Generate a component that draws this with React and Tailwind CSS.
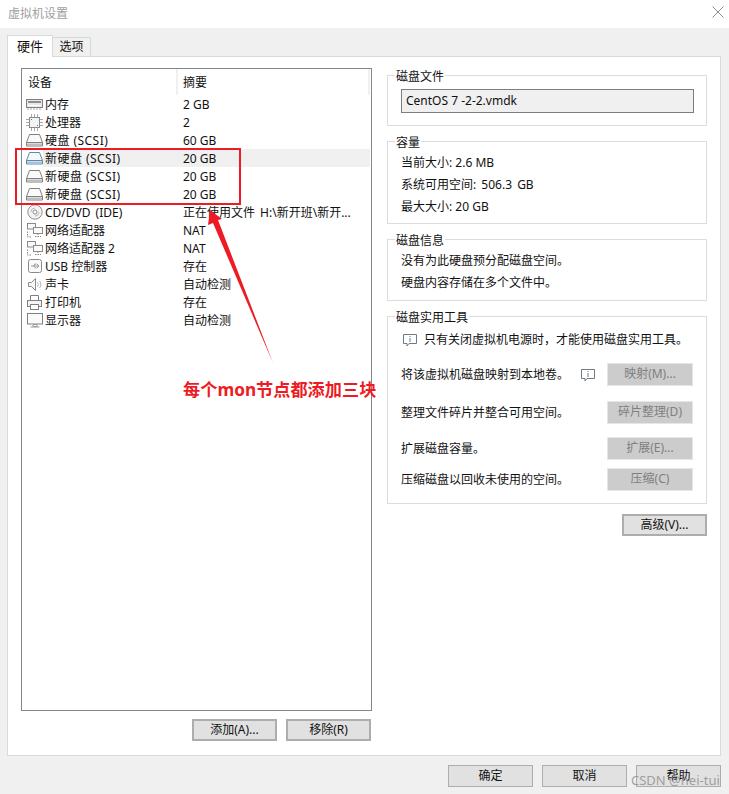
import React from "react";

const Cjk = "font-['Noto_Sans','Noto_Sans_CJK_SC',sans-serif]";

const MemoryIcon = () => (
  <svg width="17" height="11" viewBox="0 0 17 11" fill="none" stroke="#808080">
    <rect x="0.5" y="0.5" width="16" height="8" fill="#e8e8e8" />
    <path d="M2 3h13" stroke="#8f8f8f" strokeWidth="2" />
    <path d="M2 6.500h13" stroke="#fff" />
    <path d="M1 10h15" stroke="#a8a8a8" strokeDasharray="2 1" />
  </svg>
);

const CpuIcon = () => (
  <svg width="17" height="17" viewBox="0 0 17 17" fill="none" stroke="#8a8a8a">
    <rect x="3.5" y="3.5" width="10" height="10" fill="#f4f4f4" />
    <path d="M5.5 0v3M8.5 0v3M11.5 0v3M5.5 14v3M8.5 14v3M11.5 14v3M0 5.5h3M0 8.5h3M0 11.5h3M14 5.5h3M14 8.5h3M14 11.5h3" stroke="#a8a8a8" />
    <path d="M5 5h1v1H5zM11 11h1v1h-1z" fill="#777" stroke="none" />
  </svg>
);

const DiskIcon = ({ blue }) => {
  const c = blue ? "#5f87a8" : "#808080";
  return (
    <svg width="17" height="13" viewBox="0 0 17 13" fill="none" stroke={c}>
      <path d="M3.5 0.5h10l3 8v3.5h-16V8.5z" fill={blue ? "#f4f8fb" : "#fafafa"} />
      <path d="M0.5 8.5h16" />
      <path d="M1 10.5h15" stroke={blue ? "#a5c3da" : "#bdbdbd"} strokeWidth="2" />
    </svg>
  );
};

const CdIcon = () => (
  <svg width="16" height="16" viewBox="0 0 16 16" fill="none" stroke="#8f8f8f">
    <circle cx="8" cy="8" r="7.2" fill="#f2f2f2" />
    <circle cx="8" cy="8" r="2" fill="#fff" />
    <path d="M4 8a4 4 0 0 1 4-4M12 8a4 4 0 0 1-4 4" stroke="#bdbdbd" />
  </svg>
);

const NetIcon = () => (
  <svg width="16" height="15" viewBox="0 0 16 15" fill="none" stroke="#8a8a8a">
    <rect x="0.5" y="0.5" width="8" height="5.5" fill="#fafafa" />
    <rect x="6.5" y="4.5" width="9" height="6" fill="#fafafa" />
    <path d="M11 10.5v3M8 13.5h6M0.5 8.5v5.5h4" strokeDasharray="1.5 1" />
  </svg>
);

const UsbIcon = () => (
  <svg width="14" height="14" viewBox="0 0 14 14" fill="none" stroke="#8a8a8a">
    <rect x="0.5" y="0.5" width="13" height="13" rx="2" fill="#fafafa" />
    <path d="M3 7h8M9 5l2 2-2 2M5.5 7l1.500-2h1.500M6 7l1.500 2h1" stroke="#999" />
  </svg>
);

const SoundIcon = () => (
  <svg width="14" height="13" viewBox="0 0 14 13" fill="none" stroke="#8a8a8a">
    <path d="M0.500 4.500h3l4-4v12l-4-4h-3z" fill="#f6f6f6" />
    <path d="M9.500 4.500a3 3 0 0 1 0 4M11.500 3a5 5 0 0 1 0 7" stroke="#b0b0b0" />
  </svg>
);

const PrinterIcon = () => (
  <svg width="15" height="15" viewBox="0 0 15 15" fill="none" stroke="#808080">
    <path d="M3.500 5.500v-5h8v5" fill="#fff" />
    <rect x="0.500" y="5.500" width="14" height="6" fill="#f4f4f4" />
    <rect x="3.500" y="9.500" width="8" height="5" fill="#fff" />
  </svg>
);

const MonitorIcon = () => (
  <svg width="16" height="15" viewBox="0 0 16 15" fill="none" stroke="#808080">
    <rect x="0.500" y="0.500" width="15" height="10.500" fill="#fafafa" />
    <path d="M6 11.500h4v2H6zM3.500 14h9" stroke="#9a9a9a" />
  </svg>
);

const InfoIcon = () => (
  <svg width="14" height="13" viewBox="0 0 14 13" fill="none" stroke="#707a80">
    <path d="M0.500 0.500h13v9H6l-2 2.500v-2.500H0.500z" fill="#fff" />
    <path d="M7 2v1M7 4v4" stroke="#5a7f96" />
  </svg>
);

const scsi = "tracking-[0.45px]";

const devices = [
  { icon: <MemoryIcon />, name: "内存", summary: "2 GB" },
  { icon: <CpuIcon />, name: "处理器", summary: "2" },
  { icon: <DiskIcon />, name: "硬盘 (SCSI)", nameClass: scsi, summary: "60 GB" },
  { icon: <DiskIcon blue />, name: "新硬盘 (SCSI)", nameClass: scsi, summary: "20 GB", selected: true },
  { icon: <DiskIcon />, name: "新硬盘 (SCSI)", nameClass: scsi, summary: "20 GB" },
  { icon: <DiskIcon />, name: "新硬盘 (SCSI)", nameClass: scsi, summary: "20 GB" },
  { icon: <CdIcon />, name: "CD/DVD (IDE)", nameClass: "[word-spacing:2px]", summary: "正在使用文件 H:\\新开班\\新开...", summaryClass: "[word-spacing:2px]" },
  { icon: <NetIcon />, name: "网络适配器", summary: "NAT" },
  { icon: <NetIcon />, name: "网络适配器 2", summary: "NAT" },
  { icon: <UsbIcon />, name: "USB 控制器", summary: "存在" },
  { icon: <SoundIcon />, name: "声卡", summary: "自动检测" },
  { icon: <PrinterIcon />, name: "打印机", summary: "存在" },
  { icon: <MonitorIcon />, name: "显示器", summary: "自动检测" },
];

const tools = [
  { label: "将该虚拟机磁盘映射到本地卷。", button: "映射(M)...", info: true, h: "h-[38px]" },
  { label: "整理文件碎片并整合可用空间。", button: "碎片整理(D)", h: "h-[38px]" },
  { label: "扩展磁盘容量。", button: "扩展(E)...", h: "h-[34px]" },
  { label: "压缩磁盘以回收未使用的空间。", button: "压缩(C)", h: "h-[28px]" },
];

const Group = ({ title, className, children }) => (
  <fieldset className={`relative border border-[#dcdcdc] ${className}`}>
    <span className="absolute -top-[8px] left-[7px] bg-white px-px leading-[17px]">{title}</span>
    {children}
  </fieldset>
);

const Btn = ({ className = "", children }) => (
  <div className={`flex items-center justify-center border border-[#adadad] bg-[#e1e1e1] ${className}`}>
    {children}
  </div>
);

const ToolBtn = ({ children }) => (
  <div className="flex h-[23px] w-[86px] items-center justify-center border border-[#e6e6e6] bg-[#cccccc] text-[#7f7f7f]">
    {children}
  </div>
);

export default function App() {
  return (
    <div className={`relative flex h-[794px] w-[729px] flex-col overflow-hidden bg-[#f0f0f0] text-[12px] text-[#111111] ${Cjk}`}>
      {/* Title bar */}
      <div className="flex h-[28px] items-center justify-between bg-white pl-[8px] pr-[4px]">
        <span className="text-[12px] text-[#a0a0a0]">虚拟机设置</span>
        <svg width="12" height="12" viewBox="0 0 12 12" stroke="#8c8c8c" className="mr-[1px] -mt-[4px]">
          <path d="M0.500 0.500l11 11M11.500 0.500l-11 11" />
        </svg>
      </div>

      {/* Tabs */}
      <div className="relative z-10 mt-[7px] flex h-[22px] items-end pl-[7px]">
        <div className="flex h-[22px] w-[46px] items-center justify-center border border-b-0 border-[#d9d9d9] bg-white text-[13px]">硬件</div>
        <div className="mb-px flex h-[19px] w-[38px] items-center justify-center border border-b-0 border-l-0 border-[#d9d9d9] bg-[#f0f0f0]">选项</div>
      </div>

      {/* Tab panel */}
      <div className="-mt-px mx-[7px] flex h-[700px] w-[714px] gap-[15px] border border-[#d9d9d9] bg-white pl-[13px] pt-[11px]">
        <div className="flex w-[351px] flex-col">
          <div className="h-[643px] border border-[#82878f] bg-white">
            <div className="flex h-[26px] items-center">
              <div className="w-[156px] border-r-2 border-[#f0f0f0] pl-[6px] pt-[2px] leading-[24px]">设备</div>
              <div className="flex-1 border-r-2 border-[#f0f0f0] pl-[5px] pt-[2px] leading-[24px]">摘要</div>
              <div className="w-px" />
            </div>
            {devices.map((d, i) => (
              <div key={i} className="flex h-[18px] items-center">
                <div className="flex w-[21px] shrink-0 items-center justify-center pl-[4px]">{d.icon}</div>
                <div className={`flex h-full w-[327px] items-center pt-px ${d.selected ? "bg-[#f0f0f0]" : ""}`}>
                  <span className={`w-[140px] shrink-0 whitespace-nowrap pl-[2px] ${d.nameClass || ""}`}>{d.name}</span>
                  <span className={`whitespace-nowrap ${d.summaryClass || ""}`}>{d.summary}</span>
                </div>
              </div>
            ))}
          </div>
          <div className="mt-[8px] flex justify-end gap-[9px] pr-px">
            <Btn className="h-[22px] w-[85px] border-2">添加(A)...</Btn>
            <Btn className="h-[22px] w-[85px] border-2">移除(R)</Btn>
          </div>
        </div>

        <div className="mt-[7px] flex w-[320px] flex-col">
          <Group title="磁盘文件" className="h-[51px]">
            <div className="ml-[13px] mt-[13px] flex h-[24px] w-[293px] items-center border border-[#7d7d7d] bg-[#f0f0f0] pl-[4px]">CentOS 7 -2-2.vmdk</div>
          </Group>
          <Group title="容量" className="mt-[15px] h-[83px]">
            <div className="flex flex-col gap-[4px] pl-[13px] pt-[12px] leading-[18px]">
              <div>当前大小: 2.6 MB</div>
              <div className="[word-spacing:2px]">系统可用空间: 506.3 GB</div>
              <div>最大大小: 20 GB</div>
            </div>
          </Group>
          <Group title="磁盘信息" className="mt-[15px] h-[62px]">
            <div className="flex flex-col gap-[4px] pl-[13px] pt-[12px] leading-[18px]">
              <div>没有为此硬盘预分配磁盘空间。</div>
              <div>硬盘内容存储在多个文件中。</div>
            </div>
          </Group>
          <Group title="磁盘实用工具" className="mt-[15px] h-[188px]">
            <div className="flex items-center pl-[15px] pt-[14px] leading-[18px]">
              <InfoIcon />
              <span className="ml-[7px]">只有关闭虚拟机电源时，才能使用磁盘实用工具。</span>
            </div>
            <div className="mt-[6px] flex flex-col pl-[13px] pr-[13px]">
              {tools.map((t) => (
                <div key={t.label} className={`flex items-center justify-between ${t.h}`}>
                  <span className="flex items-center pt-[2px]">
                    {t.label}
                    {t.info && <span className="ml-[12px] inline-flex"><InfoIcon /></span>}
                  </span>
                  <ToolBtn>{t.button}</ToolBtn>
                </div>
              ))}
            </div>
          </Group>
          <div className="mt-[10px] flex justify-end">
            <Btn className="h-[22px] w-[85px] border-2">高级(V)...</Btn>
          </div>
        </div>
      </div>

      {/* Footer buttons */}
      <div className="mt-[9px] flex justify-end gap-[9px] pr-[8px]">
        <Btn className="h-[22px] w-[85px]">确定</Btn>
        <Btn className="h-[22px] w-[85px]">取消</Btn>
        <Btn className="h-[22px] w-[85px]">帮助</Btn>
      </div>

      {/* Watermark */}
      <span className="absolute left-[631px] top-[771px] text-[13px] text-[#8c8c8c]/80">CSDN @hei-tui</span>

      {/* Annotation */}
      <div className="absolute left-[15px] top-[148px] h-[57px] w-[226px] border-2 border-[#ed1c24]" />
      <svg className="absolute left-[195px] top-[205px]" width="85" height="165" viewBox="0 0 85 165" fill="#ed1c24">
        <path d="M15 5 L27 14 L23 15 L78 158 L18 18 L13 20 Z" />
      </svg>
      <span className="absolute left-[183px] top-[379px] text-[17.2px] font-bold leading-[22px] text-[#ed1c24]">每个mon节点都添加三块</span>
    </div>
  );
}
